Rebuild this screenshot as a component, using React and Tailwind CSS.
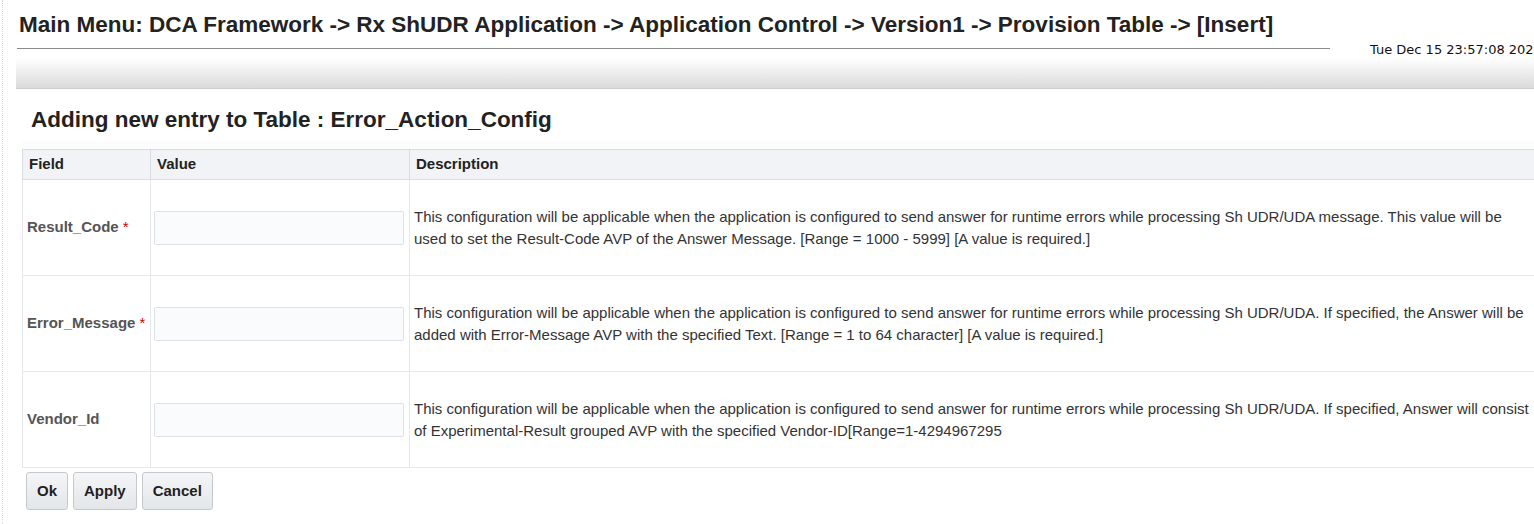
import React from "react";

const rows = [
  {
    label: "Result_Code",
    req: true,
    desc: "This configuration will be applicable when the application is configured to send answer for runtime errors while processing Sh UDR/UDA message. This value will be used to set the Result-Code AVP of the Answer Message. [Range = 1000 - 5999] [A value is required.]",
  },
  {
    label: "Error_Message",
    req: true,
    desc: "This configuration will be applicable when the application is configured to send answer for runtime errors while processing Sh UDR/UDA. If specified, the Answer will be added with Error-Message AVP with the specified Text. [Range = 1 to 64 character] [A value is required.]",
  },
  {
    label: "Vendor_Id",
    req: false,
    desc: "This configuration will be applicable when the application is configured to send answer for runtime errors while processing Sh UDR/UDA. If specified, Answer will consist of Experimental-Result grouped AVP with the specified Vendor-ID[Range=1-4294967295",
  },
];

function Btn({ children }) {
  return (
    <button className="h-[38px] px-[10px] rounded-[3px] border border-[#c5c9ce] bg-gradient-to-b from-[#f4f5f6] to-[#e3e6ea] text-[15px] font-bold text-[#1f1f1f]">
      {children}
    </button>
  );
}

export default function App() {
  return (
    <div
      className="w-[1534px] h-[524px] overflow-hidden bg-white relative"
      style={{ fontFamily: '"Liberation Sans", Arial, sans-serif' }}
    >
      <div className="absolute left-[2px] top-0 bottom-0 border-l border-dotted border-[#d4d4d4]" />
      {/* header */}
      <div className="flex items-start h-[57px]">
        <div className="ml-[17px] w-[1313px] shrink-0">
          <h1 className="pt-[12px] pl-[2px] pb-[10px] text-[22.5px] leading-[26px] font-bold text-[#222] whitespace-nowrap border-b border-[#8a8a8a]">
            Main Menu: DCA Framework -&gt; Rx ShUDR Application -&gt; Application Control -&gt; Version1 -&gt; Provision Table -&gt; [Insert]
          </h1>
        </div>
        <div
          className="ml-[40px] mt-[42px] shrink-0 text-[13px] leading-[16px] text-[#111] whitespace-nowrap"
          style={{ fontFamily: '"DejaVu Sans", Verdana, sans-serif' }}
        >
          Tue Dec 15 23:57:08 2020
        </div>
      </div>
      {/* gradient bar */}
      <div className="ml-[16px] h-[31px] mt-[1px] bg-gradient-to-b from-[#ffffff] to-[#dadada] border-b border-[#cdcdcd]" />
      {/* title */}
      <h2 className="ml-[31px] mt-[18px] text-[22.5px] leading-[25px] font-bold text-[#222]">
        Adding new entry to Table : Error_Action_Config
      </h2>
      {/* table */}
      <div className="ml-[22px] mt-[10px] w-[1530px] pt-[7px] bg-[#fcfcfc]">
        <table className="border-collapse w-[1530px] table-fixed bg-white">
          <colgroup>
            <col className="w-[128px]" />
            <col className="w-[259px]" />
            <col />
          </colgroup>
          <thead>
            <tr className="h-[30px] bg-[#f2f3f6]">
              <th className="text-left px-[6px] text-[15px] font-bold text-[#222] border border-[#d9dde3]">Field</th>
              <th className="text-left px-[6px] text-[15px] font-bold text-[#222] border border-[#d9dde3]">Value</th>
              <th className="text-left px-[6px] text-[15px] font-bold text-[#222] border border-[#d9dde3]">Description</th>
            </tr>
          </thead>
          <tbody>
            {rows.map((r) => (
              <tr key={r.label} className="h-[96px]">
                <td className="px-[4px] border border-[#e6e8eb] text-[15px] font-bold text-[#555] whitespace-nowrap">
                  {r.label}
                  {r.req && <span className="text-[#d00000] font-normal"> *</span>}
                </td>
                <td className="px-[3px] border border-[#e6e8eb]">
                  <input
                    type="text"
                    className="block w-[250px] h-[34px] bg-[#f9fbfd] border border-[#dce1e6] rounded-[2px] outline-none"
                  />
                </td>
                <td className="pl-[4px] border border-[#e6e8eb] align-middle">
                  <div className="w-[1118px] text-[15px] leading-[22px] text-[#333]">{r.desc}</div>
                </td>
              </tr>
            ))}
          </tbody>
        </table>
      </div>
      {/* buttons */}
      <div className="ml-[26px] mt-[4px] flex gap-[5px]">
        <Btn>Ok</Btn>
        <Btn>Apply</Btn>
        <Btn>Cancel</Btn>
      </div>
    </div>
  );
}
